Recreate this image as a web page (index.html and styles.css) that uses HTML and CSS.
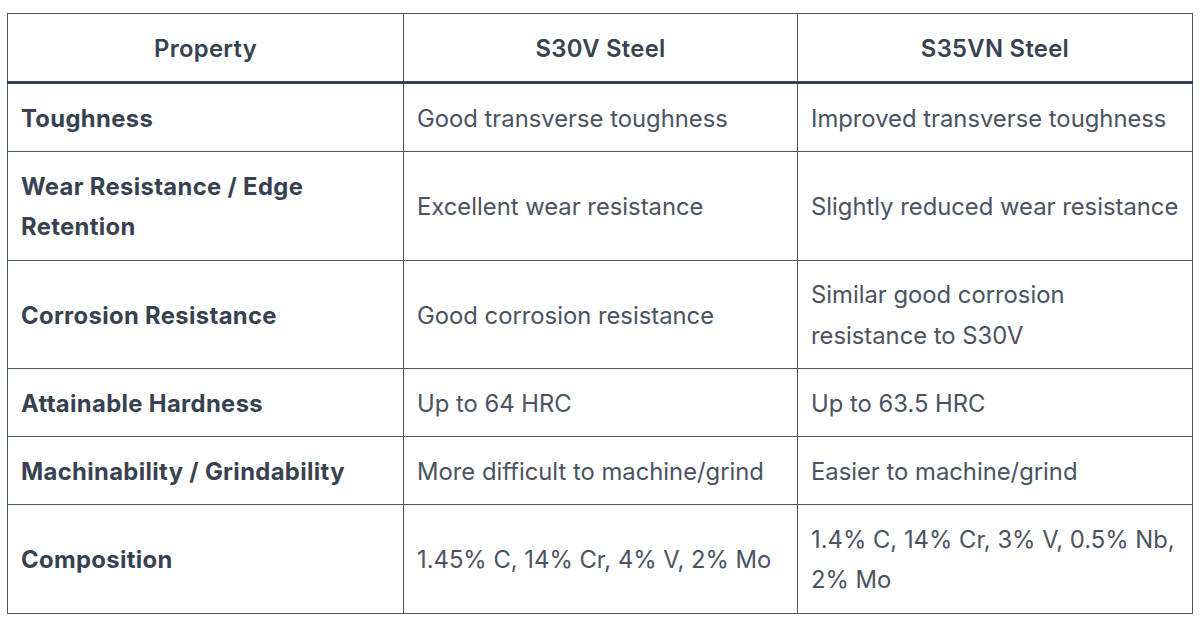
FILE: index.html
```html
<!DOCTYPE html>
<html lang="en">
<head>
<meta charset="utf-8">
<title>S30V vs S35VN</title>
<link rel="stylesheet" href="styles.css">
</head>
<body>
<div class="wrap">
<table class="cmp">
<colgroup><col class="c1"><col class="c2"><col class="c3"></colgroup>
<thead>
<tr><th>Property</th><th>S30V Steel</th><th>S35VN Steel</th></tr>
</thead>
<tbody>
<tr><td class="prop">Toughness</td><td>Good transverse toughness</td><td>Improved transverse toughness</td></tr>
<tr><td class="prop">Wear Resistance / Edge Retention</td><td>Excellent wear resistance</td><td>Slightly reduced wear resistance</td></tr>
<tr><td class="prop">Corrosion Resistance</td><td>Good corrosion resistance</td><td>Similar good corrosion resistance to S30V</td></tr>
<tr><td class="prop">Attainable Hardness</td><td>Up to 64 HRC</td><td>Up to 63.5 HRC</td></tr>
<tr><td class="prop">Machinability / Grindability</td><td>More difficult to machine/grind</td><td>Easier to machine/grind</td></tr>
<tr><td class="prop">Composition</td><td>1.45% C, 14% Cr, 4% V, 2% Mo</td><td>1.4% C, 14% Cr, 3% V, 0.5% Nb, 2% Mo</td></tr>
</tbody>
</table>
</div>
</body>
</html>
```
FILE: styles.css
```css
html, body {
  margin: 0;
  padding: 0;
  background: #ffffff;
}
.wrap {
  padding: 13px 8px 0 7px;
}
.cmp {
  width: 1185px;
  border-collapse: collapse;
  table-layout: fixed;
  font-family: Inter, "Liberation Sans", sans-serif;
  font-size: 23.8px;
  line-height: 40.5px;
  color: #4b5262;
}
.c1 { width: 396px; }
.c2 { width: 394px; }
.c3 { width: 395px; }
.cmp th, .cmp td {
  border: 1px solid #4b5563;
  padding: 14.75px 13px 11.75px;
  text-align: left;
  vertical-align: middle;
}
.cmp th {
  text-align: center;
  font-weight: 600;
  letter-spacing: 0.3px;
  color: #374151;
}
.cmp thead tr th {
  border-bottom: 3px solid #374151;
}
.cmp td.prop {
  font-weight: 700;
  letter-spacing: 0.35px;
  color: #374151;
}
```
